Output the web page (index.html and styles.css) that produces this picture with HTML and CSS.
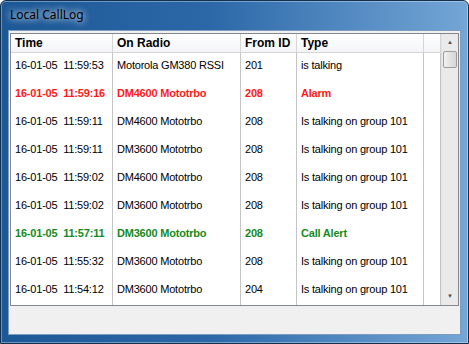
FILE: index.html
```html
<!DOCTYPE html>
<html lang="en">
<head>
  <meta charset="UTF-8" />
  <title>Local CallLog</title>
  <link rel="stylesheet" href="styles.css">
</head>
<body>
  <div class="window">
    <div class="titlebar">Local CallLog</div>
    <div class="client">
      <div class="listview">
        <div class="grid">
          <div class="hcell">Time</div>
          <div class="hcell">On Radio</div>
          <div class="hcell">From ID</div>
          <div class="hcell">Type</div>
          <div class="hcell"></div>

          <div class="cell">16-01-05&nbsp; 11:59:53</div>
          <div class="cell">Motorola GM380 RSSI</div>
          <div class="cell">201</div>
          <div class="cell">is talking</div>
          <div class="cell"></div>

          <div class="cell alarm">16-01-05&nbsp; 11:59:16</div>
          <div class="cell alarm">DM4600 Mototrbo</div>
          <div class="cell alarm">208</div>
          <div class="cell alarm">Alarm</div>
          <div class="cell"></div>

          <div class="cell">16-01-05&nbsp; 11:59:11</div>
          <div class="cell">DM4600 Mototrbo</div>
          <div class="cell">208</div>
          <div class="cell">Is talking on group 101</div>
          <div class="cell"></div>

          <div class="cell">16-01-05&nbsp; 11:59:11</div>
          <div class="cell">DM3600 Mototrbo</div>
          <div class="cell">208</div>
          <div class="cell">Is talking on group 101</div>
          <div class="cell"></div>

          <div class="cell">16-01-05&nbsp; 11:59:02</div>
          <div class="cell">DM4600 Mototrbo</div>
          <div class="cell">208</div>
          <div class="cell">Is talking on group 101</div>
          <div class="cell"></div>

          <div class="cell">16-01-05&nbsp; 11:59:02</div>
          <div class="cell">DM3600 Mototrbo</div>
          <div class="cell">208</div>
          <div class="cell">Is talking on group 101</div>
          <div class="cell"></div>

          <div class="cell alert">16-01-05&nbsp; 11:57:11</div>
          <div class="cell alert">DM3600 Mototrbo</div>
          <div class="cell alert">208</div>
          <div class="cell alert">Call Alert</div>
          <div class="cell"></div>

          <div class="cell">16-01-05&nbsp; 11:55:32</div>
          <div class="cell">DM3600 Mototrbo</div>
          <div class="cell">208</div>
          <div class="cell">Is talking on group 101</div>
          <div class="cell"></div>

          <div class="cell">16-01-05&nbsp; 11:54:12</div>
          <div class="cell">DM3600 Mototrbo</div>
          <div class="cell">204</div>
          <div class="cell">Is talking on group 101</div>
          <div class="cell"></div>
        </div>

        <div class="scrollbar">
          <div class="arrow up">&#9650;</div>
          <div class="thumb"></div>
          <div class="track"></div>
          <div class="arrow down">&#9660;</div>
        </div>
      </div>
    </div>
  </div>
</body>
</html>
```

FILE: styles.css
```css
body {
  margin: 0;
  width: 469px;
  height: 344px;
  overflow: hidden;
  background: #ffffff;
  font-family: "Liberation Sans", Arial, sans-serif;
}

.window {
  box-sizing: border-box;
  width: 469px;
  height: 344px;
  border: 1px solid #12304f;
  border-radius: 6px 6px 0 0;
  background: linear-gradient(to right, #1d5896, #2c68a8 45%, #5a90c6 80%, #74a6d6);
  box-shadow: inset 0 0 0 1px rgba(255, 255, 255, 0.35);
  padding: 0 7px 8px 7px;
  display: flex;
  flex-direction: column;
}

.titlebar {
  height: 29px;
  line-height: 27px;
  padding-left: 2px;
  font-family: "Noto Sans", "Open Sans", sans-serif;
  font-size: 12px;
  color: #000;
  text-shadow: 0 0 6px rgba(255, 255, 255, 0.9), 0 0 10px rgba(255, 255, 255, 0.6);
}

.client {
  flex: 1;
  background: #f0f0f0;
  border: 1px solid #7f9bbd;
  padding: 2px 1px 0 1px;
}

.listview {
  display: flex;
  height: 271px;
  border: 1px solid #828790;
  background: #ffffff;
}

.grid {
  display: grid;
  grid-template-columns: 102px 128px 56px 127px 17px;
  grid-template-rows: 19px repeat(9, 28px);
}

.hcell {
  box-sizing: border-box;
  padding-left: 4px;
  font-size: 12px;
  font-weight: bold;
  line-height: 19px;
  color: #000;
  background: linear-gradient(#ffffff, #f4f5f7);
  border-right: 1px solid #d5d5d5;
  border-bottom: 1px solid #d5d5d5;
  white-space: nowrap;
}

.cell {
  box-sizing: border-box;
  padding-left: 4px;
  font-size: 11px;
  letter-spacing: -0.2px;
  line-height: 24px;
  color: #000;
  border-right: 1px solid #c5c5c5;
  white-space: nowrap;
  overflow: hidden;
}

.alarm {
  color: #ff1a1a;
  font-weight: bold;
}

.alert {
  color: #168a1c;
  font-weight: bold;
}

.scrollbar {
  width: 17px;
  display: flex;
  flex-direction: column;
  background: #eaeaea;
  border-left: 1px solid #e3e3e3;
  box-sizing: border-box;
}

.arrow {
  height: 17px;
  font-size: 6px;
  line-height: 17px;
  text-align: center;
  color: #505050;
}

.thumb {
  height: 17px;
  margin: 0 1px;
  border: 1px solid #9d9d9d;
  border-radius: 2px;
  background: linear-gradient(to right, #f2f2f2, #e2e2e2 50%, #d6d6d6);
  box-sizing: border-box;
}

.track {
  flex: 1;
}
```
